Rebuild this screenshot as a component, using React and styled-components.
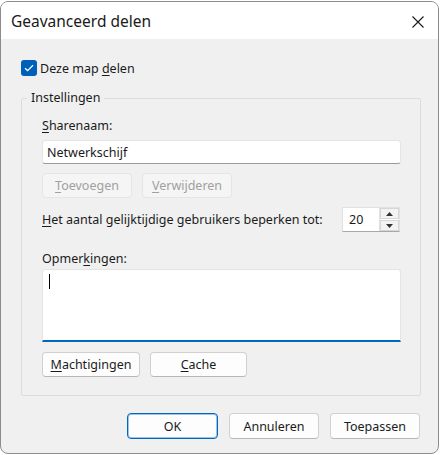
import React from 'react';
import styled, { createGlobalStyle } from 'styled-components';

const GlobalStyle = createGlobalStyle`
  html, body {
    margin: 0;
    padding: 0;
    background: #ffffff;
  }
  body {
    font-family: "Noto Sans", "Open Sans", sans-serif;
    font-size: 12.5px;
    color: #1b1b1b;
  }
`;

const Screen = styled.div`
  width: 441px;
  height: 455px;
  padding-top: 1px;
  box-sizing: border-box;
`;

const Window = styled.div`
  width: 439px;
  height: 453px;
  box-sizing: border-box;
  border: 1px solid #8c8c8c;
  border-radius: 8px;
  background: #f0f0f0;
  overflow: hidden;
  display: flex;
  flex-direction: column;
`;

const TitleBar = styled.div`
  height: 37px;
  background: #ffffff;
  display: flex;
  align-items: center;
  justify-content: space-between;
  padding: 0 14px 0 10px;
  flex-shrink: 0;
`;

const Title = styled.div`
  font-size: 15.5px;
  color: #1a1a1a;
  margin-top: 1px;
`;

const CloseIcon = styled.svg`
  width: 12px;
  height: 12px;
  margin-top: 2px;
`;

const Body = styled.div`
  flex: 1;
  padding: 21px 17px 0 20px;
  display: flex;
  flex-direction: column;
`;

const CheckRow = styled.label`
  display: flex;
  align-items: center;
  gap: 3px;
  height: 16px;
`;

const CheckBox = styled.span`
  width: 16px;
  height: 16px;
  border-radius: 3px;
  background: #005fb8;
  display: flex;
  align-items: center;
  justify-content: center;
`;

const Key = styled.u`
  text-decoration-thickness: 1px;
  text-underline-offset: 2px;
`;

const Group = styled.fieldset`
  margin: 14px 0 0 0;
  padding: 0 19px 0 20px;
  border: 1px solid #dcdcdc;
  border-radius: 2px;
  height: 306px;
  box-sizing: border-box;
  min-width: 0;
`;

const Legend = styled.legend`
  margin-left: -15px;
  padding: 0 4px 0 4px;
  line-height: 16px;
`;

const FieldLabel = styled.div`
  line-height: 16px;
  margin-top: ${(p) => p.$top || 0}px;
`;

const TextBox = styled.div`
  margin-top: 6px;
  height: 24px;
  background: #ffffff;
  border: 1px solid #e4e4e4;
  border-bottom-color: #9a9a9a;
  border-radius: 3px;
  box-sizing: border-box;
  display: flex;
  align-items: center;
  padding-left: 4px;
`;

const ButtonRow = styled.div`
  display: flex;
  gap: 10px;
  margin-top: ${(p) => p.$top || 0}px;
`;

const Button = styled.div`
  width: ${(p) => p.$w || 90}px;
  height: ${(p) => p.$h || 25}px;
  box-sizing: border-box;
  display: flex;
  align-items: center;
  justify-content: center;
  border-radius: 4px;
  background: ${(p) => (p.$disabled ? '#f5f5f5' : '#fdfdfd')};
  border: 1px solid ${(p) => (p.$disabled ? '#e5e5e5' : p.$primary ? '#0067c0' : '#d0d0d0')};
  border-bottom-color: ${(p) => (p.$disabled ? '#e5e5e5' : p.$primary ? '#0067c0' : '#b8b8b8')};
  color: ${(p) => (p.$disabled ? '#a0a0a0' : '#1b1b1b')};
  ${(p) => p.$primary && 'box-shadow: inset 0 0 0 1px #9cc3ea;'}
`;

const LimitRow = styled.div`
  display: flex;
  align-items: center;
  justify-content: space-between;
  margin-top: 9px;
  height: 25px;
`;

const Spin = styled.div`
  display: flex;
  width: 58px;
  height: 25px;
  box-sizing: border-box;
  border: 1px solid #e1e1e1;
  border-bottom-color: #a8a8a8;
  background: #ffffff;
  margin-right: 1px;
`;

const SpinValue = styled.div`
  flex: 1;
  display: flex;
  align-items: center;
  padding-left: 6px;
`;

const SpinArrows = styled.div`
  width: 19px;
  display: flex;
  flex-direction: column;
  border-left: 1px solid #e1e1e1;
`;

const SpinArrow = styled.div`
  flex: 1;
  display: flex;
  align-items: center;
  justify-content: center;
  background: #f3f3f3;
  border: 1px solid #d6d6d6;
  margin: 0 0 ${(p) => (p.$up ? 1 : 0)}px 0;
`;

const Memo = styled.div`
  margin-top: 2px;
  height: 73px;
  background: #ffffff;
  border: 1px solid #e4e4e4;
  border-bottom: 2px solid #0067c0;
  border-radius: 3px 3px 0 0;
  box-sizing: border-box;
  padding: 4px 6px;
`;

const Caret = styled.div`
  width: 1px;
  height: 15px;
  background: #000;
`;

const Footer = styled.div`
  display: flex;
  justify-content: flex-end;
  gap: 11px;
  margin-top: 17px;
  padding-right: 1px;
`;

export default function App() {
  return (
    <Screen>
      <GlobalStyle />
      <Window>
        <TitleBar>
          <Title>Geavanceerd delen</Title>
          <CloseIcon viewBox="0 0 12 12">
            <path d="M0.5 0.5 L11.5 11.5 M11.5 0.5 L0.5 11.5" stroke="#1a1a1a" strokeWidth="1.1" fill="none" />
          </CloseIcon>
        </TitleBar>
        <Body>
          <CheckRow>
            <CheckBox>
              <svg width="10" height="8" viewBox="0 0 10 8">
                <path d="M1 4.2 L3.6 6.6 L9 1.2" stroke="#fff" strokeWidth="1.3" fill="none" />
              </svg>
            </CheckBox>
            <span>
              Deze map <Key>d</Key>elen
            </span>
          </CheckRow>
          <Group>
            <Legend>Instellingen</Legend>
            <FieldLabel $top={12}>
              <Key>S</Key>harenaam:
            </FieldLabel>
            <TextBox>Netwerkschijf</TextBox>
            <ButtonRow $top={9}>
              <Button $disabled>
                <span>
                  <Key>T</Key>oevoegen
                </span>
              </Button>
              <Button $disabled>
                <span>
                  <Key>V</Key>erwijderen
                </span>
              </Button>
            </ButtonRow>
            <LimitRow>
              <span>
                <Key>H</Key>et aantal gelijktijdige gebruikers beperken tot:
              </span>
              <Spin>
                <SpinValue>20</SpinValue>
                <SpinArrows>
                  <SpinArrow $up>
                    <svg width="7" height="4" viewBox="0 0 7 4">
                      <path d="M3.5 0 L7 4 L0 4 Z" fill="#333" />
                    </svg>
                  </SpinArrow>
                  <SpinArrow>
                    <svg width="7" height="4" viewBox="0 0 7 4">
                      <path d="M0 0 L7 0 L3.5 4 Z" fill="#333" />
                    </svg>
                  </SpinArrow>
                </SpinArrows>
              </Spin>
            </LimitRow>
            <FieldLabel $top={19}>
              Opmer<Key>k</Key>ingen:
            </FieldLabel>
            <Memo>
              <Caret />
            </Memo>
            <ButtonRow $top={10}>
              <Button $w={98}>
                <span>
                  <Key>M</Key>achtigingen
                </span>
              </Button>
              <Button $w={97}>
                <span>
                  <Key>C</Key>ache
                </span>
              </Button>
            </ButtonRow>
          </Group>
          <Footer>
            <Button $w={91} $h={26} $primary>OK</Button>
            <Button $w={90} $h={26}>Annuleren</Button>
            <Button $w={90} $h={26}>Toepassen</Button>
          </Footer>
        </Body>
      </Window>
    </Screen>
  );
}
